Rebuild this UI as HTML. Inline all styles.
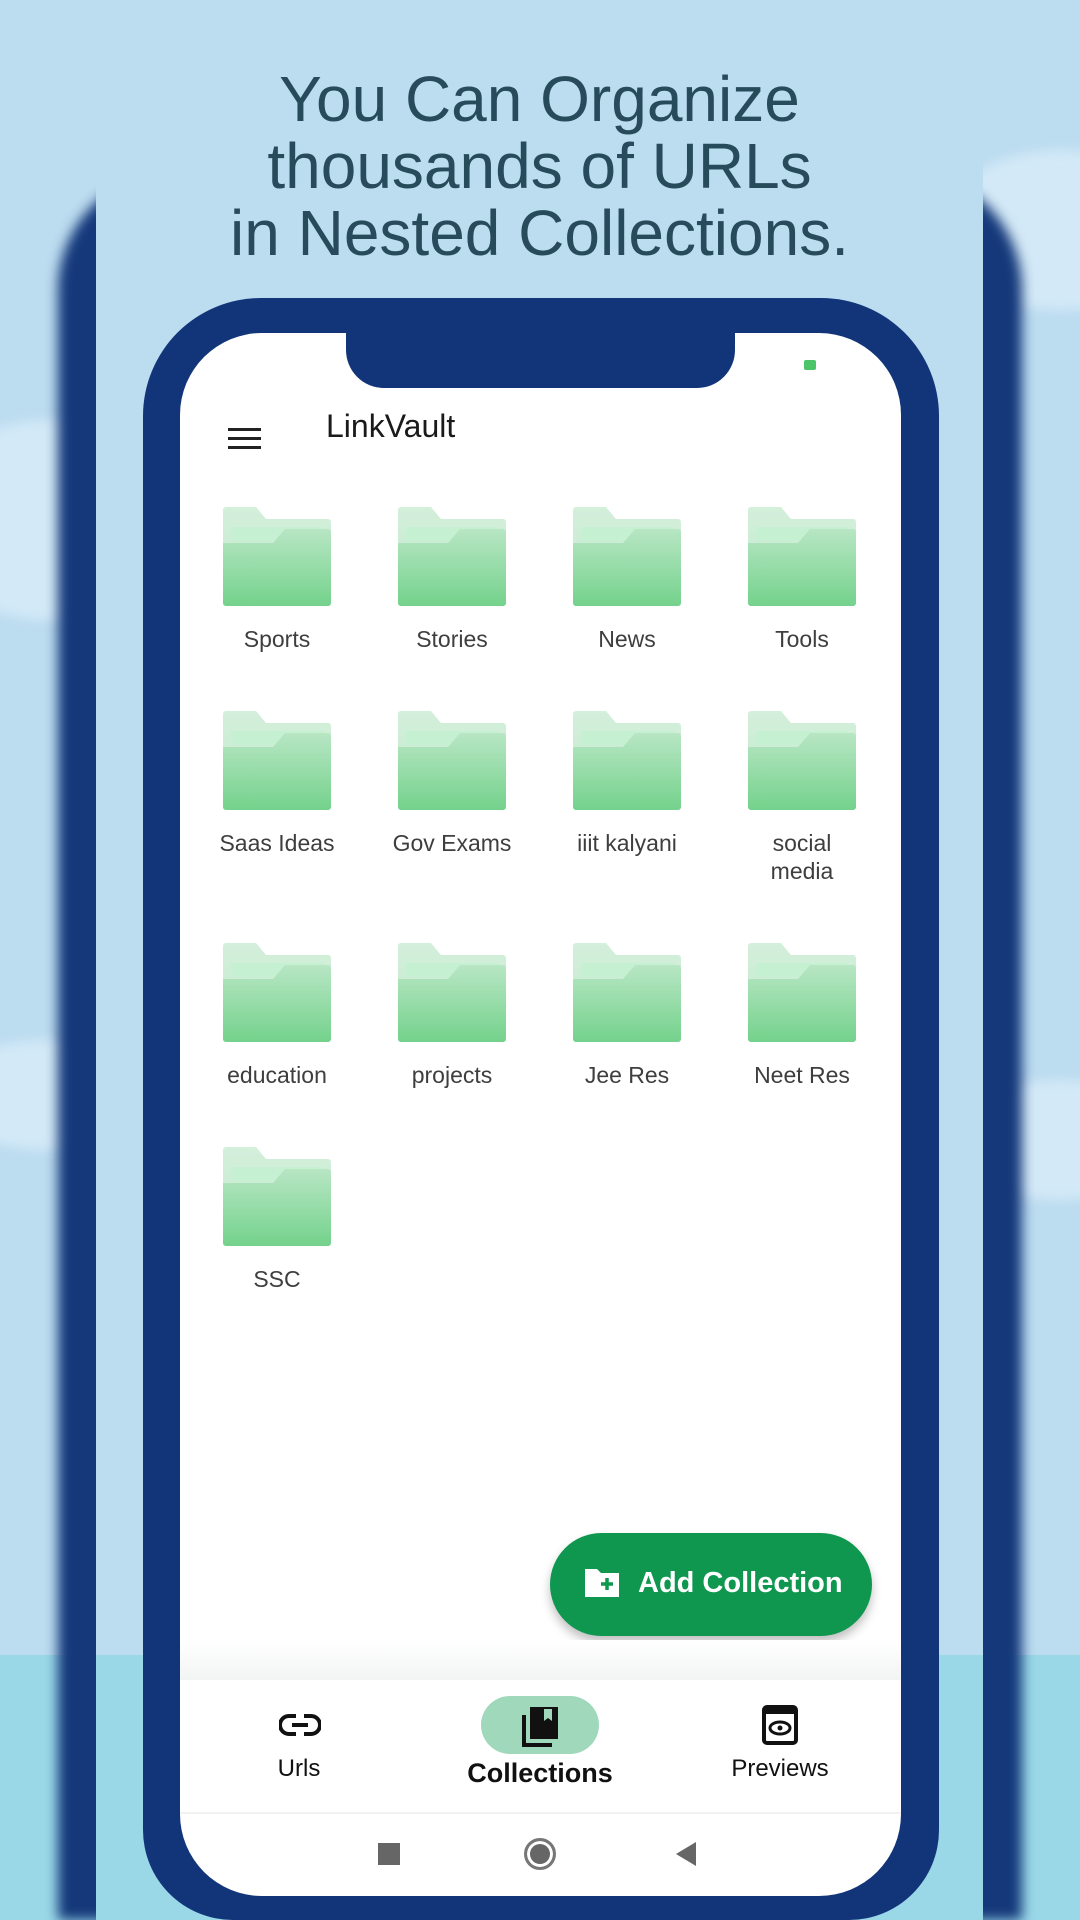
<!DOCTYPE html>
<html><head><meta charset="utf-8"><style>
*{margin:0;padding:0;box-sizing:border-box}
html,body{width:1080px;height:1920px;overflow:hidden}
body{font-family:"Liberation Sans",sans-serif}
#wrap{position:relative;width:1080px;height:1920px;overflow:hidden;background:#bcdcf0}
.abs{position:absolute}
.bgcloud{position:absolute;border-radius:50%;background:#d3e9f7;filter:blur(6px)}
.backphone{position:absolute;left:58px;top:170px;width:964px;height:1750px;border-radius:120px 120px 0 0;background:#14387a;filter:blur(6px)}
.panel{position:absolute;left:96px;top:0;width:887px;height:1920px;background:#bcdcf0}
.cyan{position:absolute;left:0;top:1655px;width:1080px;height:265px;background:#9ad8e8}
h1{position:absolute;left:96px;width:887px;top:66px;text-align:center;color:#284b5b;font-size:64px;line-height:67px;font-weight:500}
.frame{position:absolute;left:143px;top:298px;width:796px;height:1622px;background:#12357a;border-radius:118px 118px 90px 90px}
.screen{position:absolute;left:180px;top:333px;width:721px;height:1563px;background:#fff;border-radius:82px;overflow:hidden}
.notch{position:absolute;left:166px;top:-5px;width:389px;height:60px;background:#12357a;border-radius:0 0 38px 38px}
.folder{position:absolute;width:108px;height:99px}
.lbl{position:absolute;width:170px;text-align:center;color:#3e3e3e;font-size:23px;line-height:28px;font-weight:500}
</style></head><body><div id="wrap">
<div class="bgcloud" style="left:-80px;top:420px;width:260px;height:200px"></div>
<div class="bgcloud" style="left:-60px;top:1040px;width:220px;height:110px"></div>
<div class="bgcloud" style="left:940px;top:150px;width:240px;height:160px"></div>
<div class="bgcloud" style="left:960px;top:1080px;width:200px;height:120px"></div>
<div class="cyan"></div>
<div class="backphone"></div>
<div class="panel"></div>
<div class="abs" style="left:96px;top:1655px;width:887px;height:265px;background:#9ad8e8"></div>
<h1>You Can Organize<br>thousands of URLs<br>in Nested Collections.</h1>
<div class="frame"></div>
<div class="screen">
  <div class="notch"></div>
  <div class="abs" style="left:624px;top:27px;width:12px;height:10px;background:#4cc46a;border-radius:2px"></div>
  <div class="abs" style="left:48px;top:95px;width:33px;height:3px;background:#222;box-shadow:0 9px 0 #222,0 18px 0 #222"></div>
  <div class="abs" style="left:146px;top:75px;font-size:32px;color:#1a1a1a;font-weight:500">LinkVault</div>
  <svg width="0" height="0" style="position:absolute"><defs>
    <linearGradient id="g1" x1="0" y1="0" x2="0" y2="1"><stop offset="0" stop-color="#d4efdb"/><stop offset="1" stop-color="#bfe8cb"/></linearGradient>
    <linearGradient id="g2" x1="0" y1="0" x2="0" y2="1"><stop offset="0" stop-color="#b8e6c4"/><stop offset="1" stop-color="#74d28c"/></linearGradient>
  </defs></svg>
  <div id="grid"></div>
  <div class="abs" style="left:370px;top:1200px;width:322px;height:103px;border-radius:52px;background:#0f9750;box-shadow:0 6px 10px rgba(0,0,0,.25)"></div>
  <svg class="abs" style="left:403px;top:1234px" width="38" height="32" viewBox="0 0 38 32"><path d="M2 2h12l4 4h18v24H2z" fill="#fff"/><path d="M24 11v12M18 17h12" stroke="#0f9750" stroke-width="3.5"/></svg>
  <div class="abs" style="left:458px;top:1234px;font-size:29px;font-weight:bold;color:#fff">Add Collection</div>
  <div class="abs" style="left:0;top:1307px;width:721px;height:40px;background:linear-gradient(#fff,#f3f4f4)"></div>
  <div class="abs" style="left:301px;top:1363px;width:118px;height:58px;border-radius:29px;background:#a0d8bc"></div>
  <svg class="abs" style="left:99px;top:1379px" width="42" height="26" viewBox="0 0 42 26"><path d="M17 4h-7a9 9 0 0 0 0 18h7M25 4h7a9 9 0 0 1 0 18h-7M13 13h16" fill="none" stroke="#111" stroke-width="4"/></svg>
  <svg class="abs" style="left:340px;top:1372px" width="40" height="42" viewBox="0 0 40 42"><path d="M4 10v30h28" fill="none" stroke="#111" stroke-width="4"/><rect x="10" y="2" width="28" height="32" fill="#111"/><path d="M24 4v12l4-3 4 3V4z" fill="#a0d8bc"/></svg>
  <svg class="abs" style="left:582px;top:1372px" width="36" height="40" viewBox="0 0 36 40"><rect x="2" y="2" width="32" height="36" rx="3" fill="none" stroke="#111" stroke-width="4"/><rect x="2" y="2" width="32" height="7" fill="#111"/><ellipse cx="18" cy="23" rx="10" ry="6" fill="none" stroke="#111" stroke-width="3"/><circle cx="18" cy="23" r="2.5" fill="#111"/></svg>
  <div class="abs" style="left:59px;top:1422px;width:120px;text-align:center;font-size:24px;color:#111">Urls</div>
  <div class="abs" style="left:240px;top:1425px;width:240px;text-align:center;font-size:27px;font-weight:bold;color:#111">Collections</div>
  <div class="abs" style="left:520px;top:1422px;width:160px;text-align:center;font-size:24px;color:#111">Previews</div>
  <div class="abs" style="left:0;top:1479px;width:721px;height:2px;background:#f2f2f2"></div>
  <div class="abs" style="left:198px;top:1510px;width:22px;height:22px;background:#666"></div>
  <div class="abs" style="left:344px;top:1505px;width:32px;height:32px;border-radius:50%;border:3px solid #777;background:#666;box-shadow:inset 0 0 0 3px #fff"></div>
  <div class="abs" style="left:496px;top:1509px;width:0;height:0;border-top:12px solid transparent;border-bottom:12px solid transparent;border-right:20px solid #666"></div>
</div>
</div>
<script>
var names=[["Sports","Stories","News","Tools"],["Saas Ideas","Gov Exams","iiit kalyani","social media"],["education","projects","Jee Res","Neet Res"],["SSC"]];
var tops=[174,378,610,814],cx=[97,272,447,622],h="";
var svg='<svg width="108" height="99" viewBox="0 0 108 99"><path d="M3 0h30l10 12h62a3 3 0 0 1 3 3v81a3 3 0 0 1-3 3H3a3 3 0 0 1-3-3V3a3 3 0 0 1 3-3z" fill="url(#g1)"/><rect x="8" y="20" width="92" height="14" fill="#c6f0d2"/><path d="M0 36h50l12-14h43a3 3 0 0 1 3 3v71a3 3 0 0 1-3 3H3a3 3 0 0 1-3-3z" fill="url(#g2)"/></svg>';
for(var r=0;r<4;r++)for(var c=0;c<names[r].length;c++){
 h+='<div class="folder" style="left:'+(cx[c]-54)+'px;top:'+tops[r]+'px">'+svg+'</div>';
 var n=names[r][c]; if(n=="social media")n="social<br>media";
 h+='<div class="lbl" style="left:'+(cx[c]-85)+'px;top:'+(tops[r]+118)+'px">'+n+'</div>';}
document.getElementById("grid").innerHTML=h;
</script>
</body></html>
